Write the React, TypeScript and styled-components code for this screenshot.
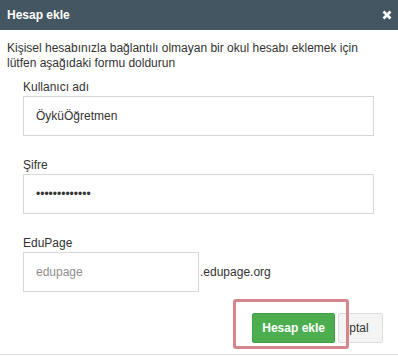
import React from 'react';
import styled, { createGlobalStyle } from 'styled-components';

const GlobalStyle = createGlobalStyle`
	html, body {
		margin: 0;
		padding: 0;
		background: #ffffff;
	}
	body {
		font-family: 'Liberation Sans', Arial, sans-serif;
		font-size: 12px;
		color: #333333;
	}
`;

const Dialog = styled.div`
	width: 398px;
	background: #ffffff;
`;

const Header = styled.div`
	height: 30px;
	padding: 0 6px 0 7px;
	display: flex;
	align-items: center;
	justify-content: space-between;
	background: #435661;
	box-sizing: border-box;
`;

const Title = styled.span`
	font-weight: bold;
	font-size: 12px;
	color: #ffffff;
`;

const CloseButton = styled.span`
	display: flex;
	width: 10px;
	height: 10px;
	cursor: pointer;
`;

const Body = styled.div`
	padding: 11px 15px 0 7px;
`;

const Intro = styled.p`
	margin: 0;
	line-height: 15px;
`;

const Form = styled.div`
	margin: 8px 9px 0 16px;
`;

const Field = styled.div`
	margin-bottom: 21px;
`;

const Label = styled.label`
	display: block;
	line-height: 17px;
`;

const TextInput = styled.input<{ $width?: string }>`
	display: block;
	box-sizing: border-box;
	width: ${({ $width }): string => $width || '100%'};
	height: 40px;
	margin: 0;
	padding: 0 12px;
	border: 1px solid #d7d7d7;
	border-radius: 0;
	outline: none;
	font: 12px 'Liberation Sans', Arial, sans-serif;
	color: #333333;
	background: #ffffff;

	&::placeholder {
		color: #8f8f8f;
	}
`;

const DomainRow = styled.div`
	display: flex;
	align-items: center;
`;

const DomainSuffix = styled.span`
	margin-left: 1px;
`;

const Footer = styled.div`
	display: flex;
	justify-content: flex-end;
	gap: 3px;
	margin-top: 1px;
`;

const Highlight = styled.span`
	position: relative;
	display: flex;
	&::after {
		content: '';
		position: absolute;
		inset: -14px -14px -6px -19px;
		border: 3px solid #d4868c;
		border-radius: 3px;
		pointer-events: none;
	}
`;

const Button = styled.button<{ $primary?: boolean }>`
	box-sizing: border-box;
	height: 30px;
	margin: 0;
	padding: ${({ $primary }): string => ($primary ? '0 9px' : '0 0 0 7px')};
	width: ${({ $primary }): string => ($primary ? 'auto' : '45px')};
	text-align: left;
	border: 1px solid ${({ $primary }): string => ($primary ? '#449d44' : '#dcdcdc')};
	border-radius: 2px;
	background: ${({ $primary }): string => ($primary ? '#4cae4f' : '#f4f4f4')};
	color: ${({ $primary }): string => ($primary ? '#ffffff' : '#333333')};
	font: ${({ $primary }): string => ($primary ? 'bold' : 'normal')} 12px 'Liberation Sans', Arial,
		sans-serif;
	cursor: pointer;
`;

const Divider = styled.div`
	margin-top: 11px;
	border-top: 1px solid #dddddd;
`;

const CloseIcon: React.VFC = () => (
	<svg width="10" height="10" viewBox="0 0 10 10">
		<path d="M1.5 1.5 L8.5 8.5 M8.5 1.5 L1.5 8.5" stroke="#ffffff" strokeWidth="2.7" />
	</svg>
);

const App: React.VFC = () => (
	<>
		<GlobalStyle />
		<Dialog>
			<Header>
				<Title>Hesap ekle</Title>
				<CloseButton>
					<CloseIcon />
				</CloseButton>
			</Header>
			<Body>
				<Intro>
					Kişisel hesabınızla bağlantılı olmayan bir okul hesabı eklemek için lütfen aşağıdaki formu
					doldurun
				</Intro>
				<Form>
					<Field>
						<Label>Kullanıcı adı</Label>
						<TextInput type="text" defaultValue="ÖyküÖğretmen" readOnly />
					</Field>
					<Field>
						<Label>Şifre</Label>
						<TextInput type="password" defaultValue="ogretmen12345" readOnly />
					</Field>
					<Field>
						<Label>EduPage</Label>
						<DomainRow>
							<TextInput type="text" $width="176px" placeholder="edupage" readOnly />
							<DomainSuffix>.edupage.org</DomainSuffix>
						</DomainRow>
					</Field>
				</Form>
				<Footer>
					<Highlight>
						<Button $primary>Hesap ekle</Button>
					</Highlight>
					<Button>İptal</Button>
				</Footer>
			</Body>
			<Divider />
		</Dialog>
	</>
);

export default App;
